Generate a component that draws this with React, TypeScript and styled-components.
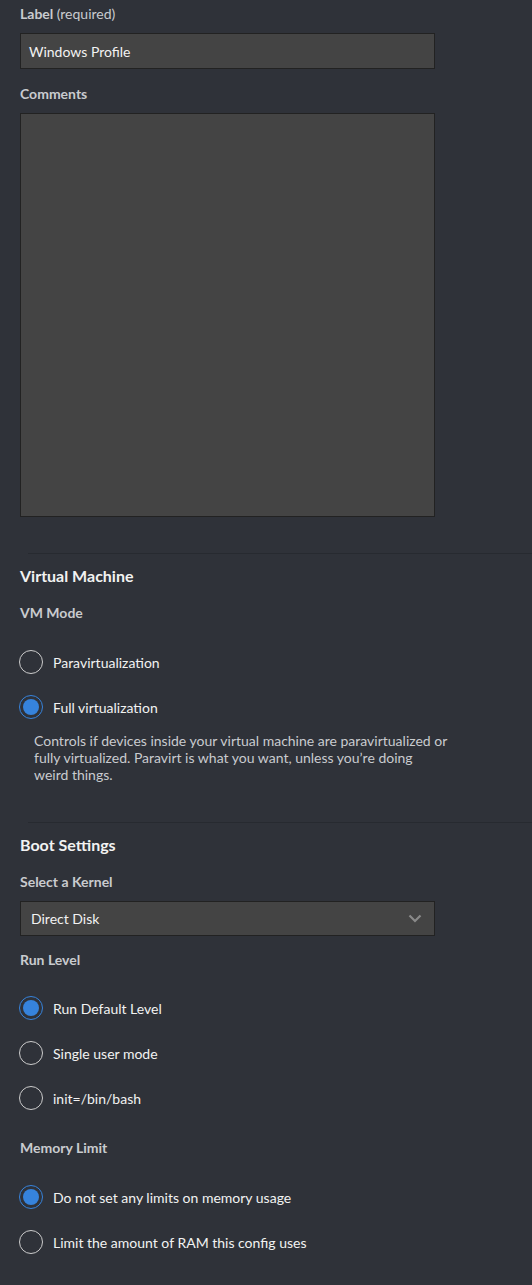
import React from "react";
import styled, { createGlobalStyle } from "styled-components";

const Global = createGlobalStyle`
  html, body { margin: 0; padding: 0; background: #2f3239; }
  body { font-family: Lato, "Noto Sans", sans-serif; color: #e6e6e6; }
  * { box-sizing: border-box; }
`;

const Page = styled.div`
  width: 532px;
  min-height: 1285px;
  background: #2f3239;
  padding-top: 5px;
`;

const Section = styled.div`
  padding: 0 20px;
  display: flex;
  flex-direction: column;
`;

const FieldLabel = styled.div<{ $mt?: number }>`
  font-size: 14px;
  font-weight: 700;
  color: #c9cbcf;
  line-height: 18px;
  margin-top: ${(p) => p.$mt ?? 0}px;
  margin-bottom: 10px;
  span { font-weight: 400; }
`;

const TextInput = styled.div`
  width: 415px;
  height: 36px;
  background: #444444;
  border: 1px solid #222222;
  color: #f2f2f2;
  font-size: 14px;
  display: flex;
  align-items: center;
  padding: 0 8px;
`;

const TextArea = styled.div`
  width: 415px;
  height: 404px;
  background: #444444;
  border: 1px solid #222222;
`;

const Divider = styled.div<{ $mt: number }>`
  margin-top: ${(p) => p.$mt}px;
  margin-left: 28px;
  height: 1px;
  background: #272a30;
`;

const Heading = styled.div`
  font-size: 16px;
  font-weight: 700;
  color: #f2f2f2;
  line-height: 20px;
  margin-top: 12px;
  margin-bottom: 18px;
`;

const RadioGroup = styled.div<{ $mt: number }>`
  display: flex;
  flex-direction: column;
  gap: 21px;
  margin-top: ${(p) => p.$mt}px;
`;

const RadioRow = styled.div`
  display: flex;
  align-items: center;
  gap: 10px;
  height: 24px;
  font-size: 14px;
  color: #f2f2f2;
`;

const Circle = styled.span<{ $on: boolean }>`
  width: 24px;
  height: 24px;
  border-radius: 50%;
  flex: none;
  margin-left: -1px;
  border: 1.5px solid ${(p) => (p.$on ? "#3683dc" : "#cccccc")};
  display: flex;
  align-items: center;
  justify-content: center;
  &::after {
    content: "";
    display: ${(p) => (p.$on ? "block" : "none")};
    width: 16px;
    height: 16px;
    border-radius: 50%;
    background: #3683dc;
  }
`;

const Help = styled.p`
  margin: 13px 0 0 14px;
  width: 415px;
  max-width: 415px;
  font-size: 14px;
  line-height: 17px;
  color: #c9cbcf;
`;

const Select = styled.div`
  width: 415px;
  height: 35px;
  background: #444444;
  border: 1px solid #222222;
  color: #f2f2f2;
  font-size: 14px;
  display: flex;
  align-items: center;
  justify-content: space-between;
  padding: 0 12px 0 10px;
`;

const Radio = ({ on, children }: { on?: boolean; children: React.ReactNode }) => (
  <RadioRow>
    <Circle $on={!!on} />
    {children}
  </RadioRow>
);

export default function App() {
  return (
    <Page>
      <Global />
      <Section>
        <FieldLabel>
          Label <span>(required)</span>
        </FieldLabel>
        <TextInput>Windows Profile</TextInput>
        <FieldLabel $mt={16}>Comments</FieldLabel>
        <TextArea />
      </Section>
      <Divider $mt={36} />
      <Section>
        <Heading>Virtual Machine</Heading>
        <FieldLabel>VM Mode</FieldLabel>
        <RadioGroup $mt={18}>
          <Radio>Paravirtualization</Radio>
          <Radio on>Full virtualization</Radio>
        </RadioGroup>
        <Help>
          Controls if devices inside your virtual machine are paravirtualized or fully virtualized. Paravirt is what
          you want, unless you’re doing weird things.
        </Help>
      </Section>
      <Divider $mt={39} />
      <Section>
        <Heading>Boot Settings</Heading>
        <FieldLabel>Select a Kernel</FieldLabel>
        <Select>
          Direct Disk
          <svg width="14" height="9" viewBox="0 0 14 9">
            <path d="M1.5 1.5 L7 7 L12.5 1.5" fill="none" stroke="#8a8a8a" strokeWidth="2.2" />
          </svg>
        </Select>
        <FieldLabel $mt={15}>Run Level</FieldLabel>
        <RadioGroup $mt={17}>
          <Radio on>Run Default Level</Radio>
          <Radio>Single user mode</Radio>
          <Radio>init=/bin/bash</Radio>
        </RadioGroup>
        <FieldLabel $mt={29}>Memory Limit</FieldLabel>
        <RadioGroup $mt={18}>
          <Radio on>Do not set any limits on memory usage</Radio>
          <Radio>Limit the amount of RAM this config uses</Radio>
        </RadioGroup>
      </Section>
    </Page>
  );
}
